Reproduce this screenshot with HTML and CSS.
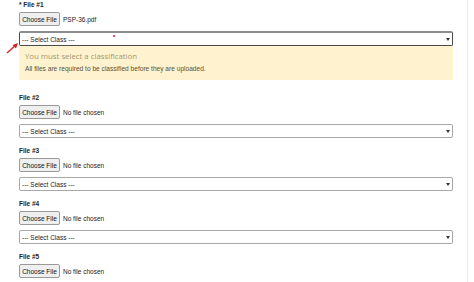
FILE: index.html
```html
<!DOCTYPE html>
<html>
<head>
<meta charset="UTF-8">
<title>Upload Files</title>
<link rel="stylesheet" href="styles.css">
</head>
<body>
	<div id="container">

		<div class="file-group first">
			<label class="title">* File #1</label>
			<div class="file-pick">
				<button type="button" class="pick-btn">Choose File</button>
				<span class="file-name">PSP-36.pdf</span>
			</div>
			<div class="select-wrap">
				<select class="myselect focused">
					<option>--- Select Class ---</option>
				</select>
			</div>
			<div class="alert">
				<div class="alert-head">You must select a classification</div>
				<div class="alert-body">All files are required to be classified before they are uploaded.</div>
			</div>
		</div>

		<div class="file-group">
			<label class="title">File #2</label>
			<div class="file-pick">
				<button type="button" class="pick-btn">Choose File</button>
				<span class="file-name">No file chosen</span>
			</div>
			<div class="select-wrap">
				<select class="myselect">
					<option>--- Select Class ---</option>
				</select>
			</div>
		</div>

		<div class="file-group">
			<label class="title">File #3</label>
			<div class="file-pick">
				<button type="button" class="pick-btn">Choose File</button>
				<span class="file-name">No file chosen</span>
			</div>
			<div class="select-wrap">
				<select class="myselect">
					<option>--- Select Class ---</option>
				</select>
			</div>
		</div>

		<div class="file-group">
			<label class="title">File #4</label>
			<div class="file-pick">
				<button type="button" class="pick-btn">Choose File</button>
				<span class="file-name">No file chosen</span>
			</div>
			<div class="select-wrap">
				<select class="myselect">
					<option>--- Select Class ---</option>
				</select>
			</div>
		</div>

		<div class="file-group">
			<label class="title">File #5</label>
			<div class="file-pick">
				<button type="button" class="pick-btn">Choose File</button>
				<span class="file-name">No file chosen</span>
			</div>
		</div>

		<!-- annotation drawn over the screenshot -->
		<svg class="pointer" width="16" height="16" viewBox="0 0 16 16">
			<line x1="1" y1="13" x2="10" y2="5" stroke="#d81f26" stroke-width="1.4"/>
			<polygon points="12,3 6.5,5 10,8.5" fill="#d81f26"/>
		</svg>
		<span class="dot"></span>
	</div>
</body>
</html>
```

FILE: styles.css
```css
	body {
		margin: 0;
		padding: 0;
		background: #fff;
		font-family: "Liberation Sans", Arial, sans-serif;
		color: #222;
	}

	#container {
		position: relative;
		width: 434px;
		height: 282px;
		padding: 0 14px 0 19px;
		border-right: 1px solid #ececec;
		overflow: hidden;
	}

	.file-group {
		display: flex;
		flex-direction: column;
		margin-bottom: 8px;
	}

	label.title {
		font-size: 6.5px;
		line-height: 10px;
		font-weight: bold;
		color: #222;
	}

	.file-pick {
		display: flex;
		align-items: center;
		margin-top: 2px;
		height: 14px;
	}

	.pick-btn {
		height: 14px;
		width: 41px;
		padding: 0;
		margin: 0;
		background: #efefef;
		border: 1px solid #9a9a9a;
		border-radius: 2px;
		font-family: "Liberation Sans", Arial, sans-serif;
		font-size: 6.5px;
		color: #111;
	}

	.file-name {
		margin-left: 3px;
		font-size: 6.5px;
		color: #222;
	}

	.select-wrap {
		position: relative;
		margin-top: 5px;
	}

	.select-wrap::after {
		content: "";
		position: absolute;
		right: 3px;
		top: 6px;
		border-left: 2px solid transparent;
		border-right: 2px solid transparent;
		border-top: 3px solid #333;
	}

	select.myselect {
		-webkit-appearance: none;
		appearance: none;
		display: block;
		width: 100%;
		height: 14px;
		padding: 0 0 0 2px;
		margin: 0;
		background: #fff;
		border: 1px solid #a8a8a8;
		border-radius: 2px;
		font-family: "Liberation Sans", Arial, sans-serif;
		font-size: 6.5px;
		color: #222;
	}

	select.focused {
		height: 15px;
		border: 1px solid #4a4a4a;
		border-top: 2px solid #8c8c8c;
	}

	.first .select-wrap::after {
		top: 7px;
	}

	.alert {
		height: 34px;
		box-sizing: border-box;
		padding: 5px 6px 0 6px;
		margin-bottom: 5px;
		background: #fff3cf;
	}

	.alert-head {
		font-family: "Open Sans", sans-serif;
		font-size: 7.8px;
		line-height: 10px;
		color: #a3956a;
	}

	.alert-body {
		margin-top: 3px;
		font-size: 6.6px;
		line-height: 10px;
		color: #5a4f33;
	}

	svg.pointer {
		position: absolute;
		left: 6px;
		top: 40px;
	}

	.dot {
		position: absolute;
		left: 113px;
		top: 35px;
		width: 2px;
		height: 2px;
		background: #e05070;
	}
```
